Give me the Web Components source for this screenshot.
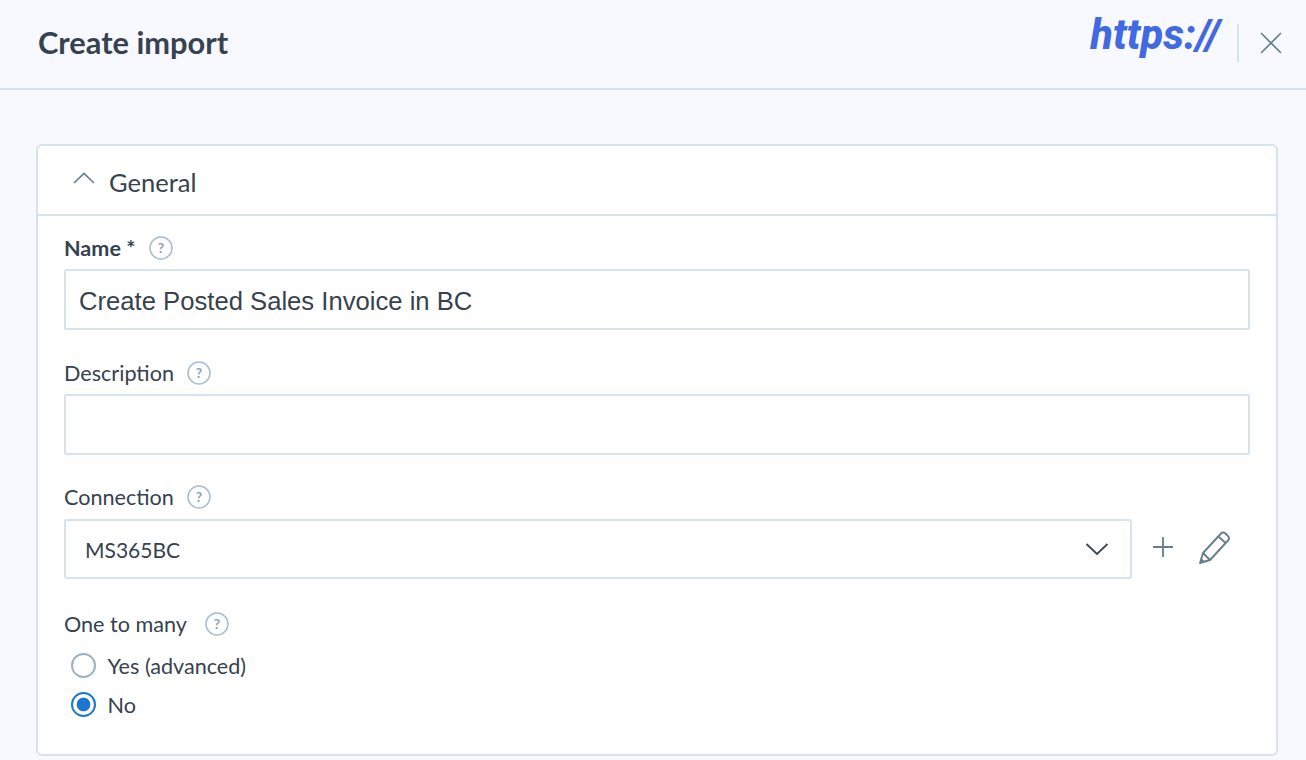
<!DOCTYPE html>
<html><head><meta charset="utf-8">
<style>
html,body{margin:0;padding:0;height:100%;background:#f8f9ff;overflow:hidden}
body{font-family:"Lato","Noto Sans",sans-serif;color:#36424f}
</style></head>
<body>
<template id="t-help"><style>
:host{display:inline-flex;width:24px;height:24px}
svg{width:24px;height:24px;display:block}
</style><svg viewBox="0 0 24 24"><circle cx="12" cy="12" r="11" fill="none" stroke="#a9bccd" stroke-width="1.5"/><text x="12" y="17" text-anchor="middle" font-family="Lato,sans-serif" font-weight="700" font-size="14" fill="#8ea4b8">?</text></svg></template>

<template id="t-header"><style>
:host{display:flex;align-items:center;box-sizing:border-box;height:90px;border-bottom:2px solid #d6e3ec;background:#f8f9ff;padding:0 23px 0 38px}
h1{margin:0;font-weight:700;font-size:30.8px;color:#36424f;flex:1;margin-top:-3px}
.logo{font-family:Roboto,sans-serif;font-style:italic;font-weight:800;font-size:41.6px;color:#4169e1;margin-top:-20px}
.sep{width:2px;height:38px;background:#d6e3ec;margin:-3px 20px 0 17px}
svg{width:24px;height:24px;display:block;margin-top:-3px}
</style><h1><slot></slot></h1><span class="logo">https://</span><span class="sep"></span>
<svg viewBox="0 0 24 24"><path d="M2 2 L22 22 M22 2 L2 22" stroke="#677f8c" stroke-width="1.6" fill="none"/></svg></template>

<template id="t-card"><style>
:host{display:block;box-sizing:border-box;margin:54px 28px 0 36px;height:612px;background:#fff;border:2px solid #d6e3ec;border-radius:6px}
.head{display:flex;align-items:center;height:68px;border-bottom:2px solid #d6e3ec;padding-left:35px;gap:14px;font-size:25.5px;color:#36424f}
.head span{padding-top:3px}
svg{width:22px;height:12px;display:block;margin-top:-4px}
.body{padding:18px 26px 0 26px;display:flex;flex-direction:column}
</style><div class="head"><svg viewBox="0 0 22 12"><path d="M1 11 L11 1.5 L21 11" fill="none" stroke="#677f8c" stroke-width="1.7"/></svg><span><slot name="title"></slot></span></div><div class="body"><slot></slot></div></template>

<template id="t-field"><style>
:host{display:flex;flex-direction:column;font-size:21.6px;color:#36424f}
.lab{display:flex;align-items:center;height:28px;gap:var(--lab-gap,13px);margin-bottom:var(--lab-mb,8px)}
:host([strong]) .lab span.t{font-weight:700}
</style><div class="lab"><span class="t"><slot name="label"></slot></span><x-help></x-help></div><slot></slot></template>

<template id="t-input"><style>
:host{display:block;box-sizing:border-box;height:61px;border:2px solid #d6e3ec;border-radius:2px;background:#fff;padding:0 13px;line-height:61px;font-family:"Liberation Sans",Arial,sans-serif;font-size:25.65px;color:#36424f}
</style><slot></slot></template>

<template id="t-select"><style>
:host{display:flex;align-items:center;gap:20px}
.box{flex:0 0 1068px;box-sizing:border-box;height:60px;border:2px solid #d6e3ec;border-radius:3px;display:flex;align-items:center;justify-content:space-between;padding:0 21px 0 19px;font-size:21px;color:#36424f}
svg{display:block}
</style><div class="box"><span><slot></slot></span><svg width="24" height="14" viewBox="0 0 24 14"><path d="M1.5 2 L12 12 L22.5 2" fill="none" stroke="#3c4650" stroke-width="1.8"/></svg></div>
<svg width="22" height="22" viewBox="0 0 22 22" style="margin-top:-4px"><path d="M11 1 V21 M1 11 H21" stroke="#677f8c" stroke-width="1.8" fill="none"/></svg>
<svg width="34" height="36" viewBox="0 0 34 36" style="margin-left:3px;margin-top:-2px"><path d="M3 33 L6 23 L24 3.5 Q26 1.5 28.5 3.5 L31 6 Q33 8.5 31 10.5 L13 30 Z M6 23 L13 30 M21.5 6.5 L28.5 13" fill="none" stroke="#677f8c" stroke-width="1.9" stroke-linejoin="round"/><path d="M3 33 L4.4 28 L8 31.8 Z" fill="#677f8c"/></svg></template>

<template id="t-radio"><style>
:host{display:flex;align-items:center;gap:12px;height:39px;font-size:21.6px;color:#36424f;padding-left:7px}
i{display:block;box-sizing:border-box;width:25px;height:25px;border-radius:50%;border:2.5px solid #9db0c2;background:#fff;margin-left:-.5px}
:host([checked]) i{border-color:#1c76d2;background:radial-gradient(circle,#1c76d2 0 6.5px,#fff 7.2px)}
</style><i></i><span><slot></slot></span></template>

<x-header>Create import</x-header>
<x-card>
  <span slot="title">General</span>
  <x-field strong style="--lab-mb:7px;--lab-gap:14px;margin-bottom:29px"><span slot="label">Name *</span><x-input>Create Posted Sales Invoice in BC</x-input></x-field>
  <x-field style="--lab-mb:7px;margin-bottom:28px"><span slot="label">Description</span><x-input></x-input></x-field>
  <x-field style="margin-bottom:31px"><span slot="label">Connection</span><x-select>MS365BC</x-select></x-field>
  <x-field style="--lab-gap:18px;--lab-mb:8px"><span slot="label">One to many</span><x-radio>Yes (advanced)</x-radio><x-radio checked>No</x-radio></x-field>
</x-card>
<script>
for (const [tag,id] of [["x-help","t-help"],["x-header","t-header"],["x-card","t-card"],["x-field","t-field"],["x-input","t-input"],["x-select","t-select"],["x-radio","t-radio"]]) {
  customElements.define(tag, class extends HTMLElement {
    constructor(){super();this.attachShadow({mode:"open"}).appendChild(document.getElementById(id).content.cloneNode(true));}
  });
}
</script>
</body></html>
